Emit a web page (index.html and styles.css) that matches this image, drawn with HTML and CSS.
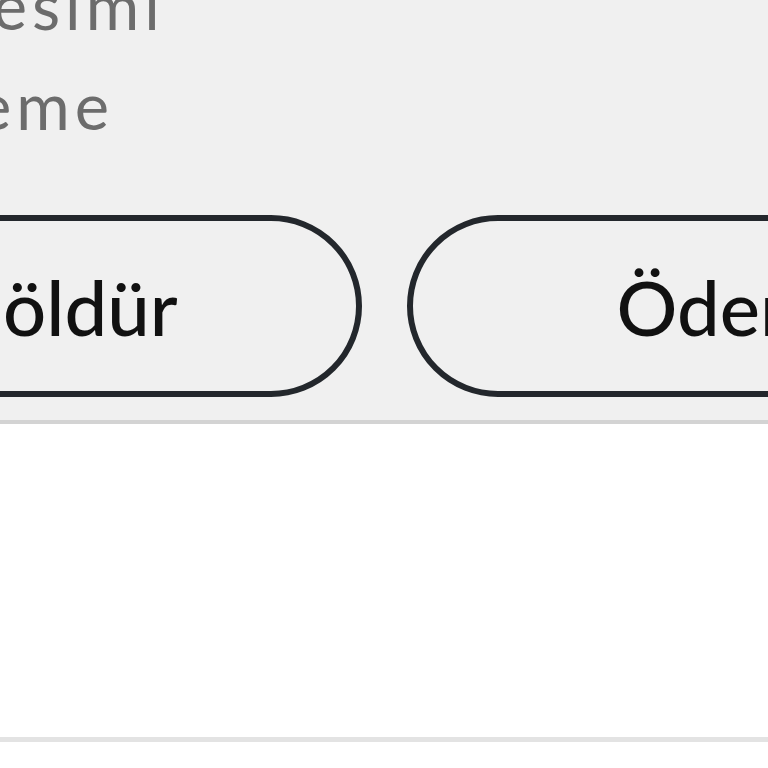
FILE: index.html
```
<!DOCTYPE html>
<html lang="tr">

<head>
    <meta charset="utf-8" />
    <title>Ödeme</title>
    <link rel="stylesheet" href="styles.css">
</head>

<body>
    <div class="Page">
        <div class="Panel">
            <div class="Details">
                <div class="DetailLine">Hesap kesimi</div>
                <div class="DetailLine">Kart ödeme</div>
            </div>
            <div class="Actions">
                <button class="Action ActionLeft">Hesabı böldür</button>
                <button class="Action ActionRight">Ödeme yap</button>
            </div>
        </div>
        <div class="Spacer"></div>
        <div class="Rest"></div>
    </div>
</body>

</html>
```

FILE: styles.css
```
html,
body {
    margin: 0;
    padding: 0;
    background: #ffffff;
    overflow: hidden;
}

.Page {
    width: 768px;
    height: 768px;
    overflow: hidden;
    font-family: "Lato", "Liberation Sans", sans-serif;
}

.Panel {
    background: #f0f0f0;
    border-bottom: 4px solid #d3d3d3;
    padding-bottom: 23px;
    overflow: hidden;
}

.Details {
    margin-top: -45px;
    margin-left: -270px;
    white-space: nowrap;
}

.DetailLine {
    font-size: 65px;
    font-weight: 400;
    letter-spacing: 5px;
    line-height: 100px;
    color: #6c6c6c;
}

.Actions {
    display: flex;
    justify-content: center;
    gap: 45px;
    margin-top: 60px;
}

.Action {
    flex: 0 0 auto;
    width: 760px;
    height: 182px;
    box-sizing: border-box;
    border: 6px solid #23272c;
    border-radius: 91px;
    background: transparent;
    font-family: "Lato", "Liberation Sans", sans-serif;
    font-size: 76px;
    font-weight: 500;
    color: #111111;
    white-space: nowrap;
}

.ActionLeft {
    text-align: right;
    padding-right: 178px;
}

.ActionRight {
    text-align: left;
    padding-left: 204px;
}

.Spacer {
    height: 313px;
}

.Rest {
    border-top: 5px solid #e3e3e3;
}
```
